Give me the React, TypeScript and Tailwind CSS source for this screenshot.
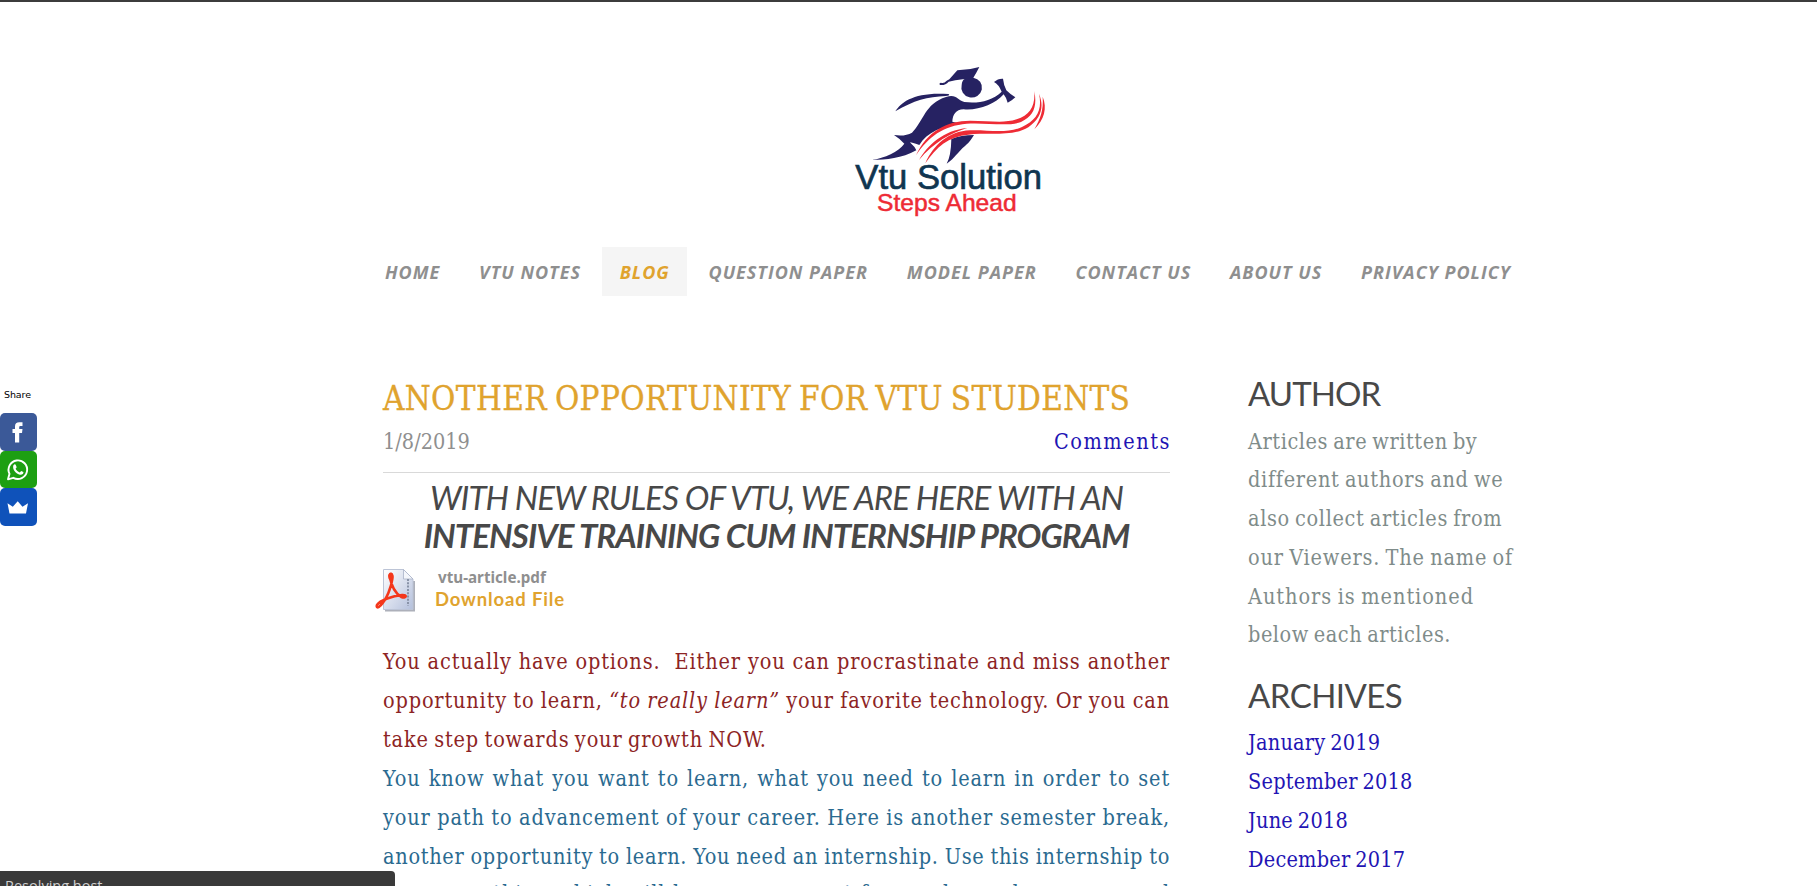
import React from "react";

const NAV = ["HOME", "VTU NOTES", "BLOG", "QUESTION PAPER", "MODEL PAPER", "CONTACT US", "ABOUT US", "PRIVACY POLICY"];

type LineProps = { children: React.ReactNode; className: string };

function Line({ children, className }: LineProps) {
  return <span className={`block h-[38.8px] whitespace-nowrap ${className}`}>{children}</span>;
}

function Logo() {
  return (
    <svg width="220" height="170" viewBox="0 0 660 510" className="block" aria-label="Vtu Solution">
      <g fill="#262262">
        <path d="M328 73 L352 46 Q385 46 418 36 Q408 56 400 68 A31 30 0 1 1 365 90 Q366 76 374 72 L346 76 Q336 78 326 80 Q316 92 300 90 Q296 84 303 83 Q312 86 320 77 Z" />
        <path d="M166 169 C184 140 225 110 325 117 C330 119 328 122 318 123 C262 125 222 136 166 169 Z" />
        <path d="M94 315 C135 309 175 291 193 266 Q178 250 162 240 Q195 245 216 233 C250 200 255 145 318 126 C350 116 352 136 373 141 C415 146 455 138 485 110 Q476 88 462 81 Q474 70 489 71 Q491 90 499 106 Q512 119 526 127 Q515 138 503 143 Q499 128 491 118 C465 148 415 167 371 163 C347 163 338 180 337 200 Q350 202 362 207 C310 212 260 232 238 270 Q205 258 211 263 Q225 275 229 286 C185 310 140 315 94 315 Z" />
        <path d="M334 252 Q362 240 402 240 C391 258 386 263 375 273 C352 292 345 309 320 326 Q333 304 334 252 Z" />
      </g>
      <g fill="#ee2b35">
        <path d="M228 301 C260 230 320 197 390 197 C450 197 490 206 530 193 C569 180 586 155 583 108 C592 155 581 184 543 201 C500 216 440 202 380 206 C310 212 265 245 228 301 Z" />
        <path d="M237 315 C263 270 310 226 382 219 C335 232 280 263 237 315 Z" />
        <path d="M256 325 C280 270 325 229 390 226 C445 224 500 237 546 216 C590 195 608 166 597 116 C613 155 604 190 565 217 C520 246 440 232 385 239 C325 245 290 275 256 325 Z" />
        <path d="M608 125 C622 160 613 193 583 223 C601 191 611 166 608 125 Z" />
      </g>
      <text x="46" y="402" textLength="560" lengthAdjust="spacingAndGlyphs" fontFamily="Liberation Sans, sans-serif" fontSize="106" fill="#0f3550" stroke="#0f3550" strokeWidth="2">Vtu Solution</text>
      <text x="111" y="468" textLength="419" lengthAdjust="spacingAndGlyphs" fontFamily="Liberation Sans, sans-serif" fontSize="73" fill="#ee2b35" stroke="#ee2b35" strokeWidth="1.5">Steps Ahead</text>
    </svg>
  );
}

function PdfIcon() {
  return (
    <svg width="41" height="44" viewBox="0 0 41 44" className="block">
      <defs>
        <linearGradient id="sheet" x1="0" y1="0" x2="1" y2="1">
          <stop offset="0" stopColor="#ffffff" />
          <stop offset="1" stopColor="#b4c0dc" />
        </linearGradient>
      </defs>
      <path d="M10 42.5 H39 V13" fill="none" stroke="#8a8f9c" strokeWidth="2" opacity="0.7" />
      <path d="M8.500 1.500 H28.500 L38 11 V41.500 H8.500 Z" fill="url(#sheet)" stroke="#bcc4d6" />
      <path d="M28.500 1.500 V11 H38 Z" fill="#f4f6fb" stroke="#a9b3c8" strokeWidth="0.800" />
      <path d="M33 11 V38" stroke="#8993a8" strokeWidth="2" strokeDasharray="2 1.300" />
      <path d="M14.500 7.500 C16 5 18 6 17.300 11 C16.300 19 12 31 5.500 37.500 C3 40.500 1 39.500 2 37 C5 32 18 28 27 27 C33 26.500 31 31 26.500 29 C20 25.500 16 16 14.500 7.500 Z" fill="none" stroke="#f4371b" strokeWidth="2.600" strokeLinejoin="round" />
      <ellipse cx="15.800" cy="8.500" rx="2.500" ry="4" fill="#f4371b" />
    </svg>
  );
}

function ShareBar() {
  return (
    <aside className="absolute left-0 top-[386px] w-[37px]">
      <div className="h-[25px] pl-1 font-['DejaVu_Sans',sans-serif] text-[9.500px] leading-[14px] tracking-[-0.1px] text-black">Share</div>
      <div className="flex h-[38px] items-center justify-center rounded-[5px] bg-[#3b5998]">
        <svg width="37" height="38" viewBox="0 0 37 38">
          <path d="M15 29.500 V20 H12.500 V16 H15 V13.500 C15 10.500 16.500 9.300 19.300 9.300 H22.500 V13 H20.500 C19.500 13 19.200 13.500 19.200 14.500 V16 H22.500 L22 20 H19.200 V29.500 Z" fill="#fff" />
        </svg>
      </div>
      <div className="flex h-[37px] items-center justify-center rounded-[5px] bg-[#1d9f12]">
        <svg width="37" height="37" viewBox="0 0 37 37">
          <path d="M8 28.300 L9.500 22.800 A9.300 9.300 0 1 1 13.300 26.800 Z" fill="none" stroke="#fff" strokeWidth="1.900" strokeLinejoin="round" />
          <path d="M13.300 14.500 C14.500 12.800 15.500 13.200 16 14.500 L16.700 16.200 L15.600 17.800 C16.500 19.500 18 20.800 19.700 21.400 L21.200 19.900 L23.400 21 C23.800 22.500 22 24 20 23.700 C16 23 12.200 18.500 13.300 14.500 Z" fill="#fff" />
        </svg>
      </div>
      <div className="flex h-[38px] items-center justify-center rounded-[5px] bg-[#0f52ba]">
        <svg width="37" height="38" viewBox="0 0 37 38">
          <path d="M7.500 15.200 L12.800 18.700 L17.700 13.300 L22.500 18.700 L28 15.200 L26 25.500 H9.500 Z" fill="#fff" />
        </svg>
      </div>
    </aside>
  );
}

export default function App() {
  return (
    <div className="relative h-[886px] w-full overflow-hidden border-t-2 border-[#3c3c3c] bg-white">
      <header className="flex flex-col">
        <div className="ml-[840px] mt-[53px] h-[170px] w-[220px]">
          <Logo />
        </div>
        <nav className="ml-[367.500px] mt-[22px] flex h-[49px] gap-[3.750px] font-['Open_Sans',sans-serif] text-[18px] font-bold italic leading-[51px] tracking-[1px] text-[#8f8f8f]">
          {NAV.map((item) => (
            <a key={item} className={`whitespace-nowrap px-[17.500px] ${item === "BLOG" ? "bg-[#f5f5f5] text-[#e0a32e]" : ""}`}>
              {item}
            </a>
          ))}
        </nav>
      </header>

      <main className="ml-[383px] mt-[77px] flex gap-[78px]">
        <article className="w-[787px]">
          <h2 className="mt-[3px] h-[45px] whitespace-nowrap font-['DejaVu_Serif_Condensed','DejaVu_Serif',serif] text-[33px] leading-[45px] tracking-[0.34px] [word-spacing:-1.7px] text-[#e0a32e] [-webkit-text-stroke:0.3px_#e0a32e]">
            ANOTHER OPPORTUNITY FOR VTU STUDENTS
          </h2>
          <div className="flex h-[52px] justify-between border-b border-[#d9d9d9] font-['DejaVu_Serif_Condensed','DejaVu_Serif',serif] text-[21.500px] leading-[41px]">
            <span className="text-[#8f8f8f]">1/8/2019</span>
            <a className="-mr-px tracking-[1.550px] text-[#2214b4]">Comments</a>
          </div>
          <h2 className="mt-[5px] text-center font-['Lato',sans-serif] text-[33px] italic leading-[38px] text-[#484848]">
            <span className="block whitespace-nowrap tracking-[-0.92px]">WITH NEW RULES OF VTU, WE ARE HERE WITH AN</span>
            <span className="block whitespace-nowrap font-bold tracking-[-0.92px]">INTENSIVE TRAINING CUM INTERNSHIP PROGRAM</span>
          </h2>
          <div className="-ml-2 mt-[14px] flex h-[44px]">
            <PdfIcon />
            <div className="ml-[19px] flex flex-col">
              <span className="pl-[3px] font-['Noto_Sans',sans-serif] text-[15.200px] font-bold leading-[18px] text-[#8f8f8f]">vtu-article.pdf</span>
              <a className="font-['Lato',sans-serif] text-[18.500px] font-bold leading-[26px] tracking-[0.850px] text-[#e0a32e]">Download File</a>
            </div>
          </div>
          <div className="mt-[31px] font-['DejaVu_Serif_Condensed','DejaVu_Serif',serif] text-[21.500px] leading-[38.800px] tracking-[0.83px] [word-spacing:-1.5px]">
            <p className="text-[#8d2424]">
              <Line className="[text-align-last:justify]">You actually have options.&nbsp; Either you can procrastinate and miss another</Line>
              <Line className="[text-align-last:justify]">opportunity to learn, <em>“to really learn”</em> your favorite technology. Or you can</Line>
              <Line className="">take step towards your growth NOW.</Line>
            </p>
            <p className="mt-px text-[#2a6a90]">
              <Line className="[text-align-last:justify]">You know what you want to learn, what you need to learn in order to set</Line>
              <Line className="[text-align-last:justify]">your path to advancement of your career. Here is another semester break,</Line>
              <Line className="tracking-[0.7px] [text-align-last:justify]">another opportunity to learn. You need an internship. Use this internship to</Line>
              <Line className="-mt-[1.300px] [text-align-last:justify]">earn something which will be your passport for good uses here as a need</Line>
            </p>
          </div>
        </article>

        <aside className="w-[290px] font-['DejaVu_Serif_Condensed','DejaVu_Serif',serif] text-[21.500px] leading-[38.800px]">
          <h2 className="h-[49.500px] font-['Lato',sans-serif] text-[33px] leading-[40px] tracking-[-0.95px] text-[#484848]">AUTHOR</h2>
          <p className="[word-spacing:-1.5px] text-[#7f8c8a]">
            <Line className="tracking-[0.56px]">Articles are written by</Line>
            <Line className="tracking-[0.7px]">different authors and we</Line>
            <Line className="tracking-[0.64px]">also collect articles from</Line>
            <Line className="tracking-[0.8px]">our Viewers. The name of</Line>
            <Line className="tracking-[0.95px]">Authors is mentioned</Line>
            <Line className="tracking-[0.5px]">below each articles.</Line>
          </p>
          <h2 className="mt-[20px] h-[49px] font-['Lato',sans-serif] text-[33px] leading-[41px] tracking-[-0.55px] text-[#484848]">ARCHIVES</h2>
          <div className="tracking-[0.22px] [word-spacing:-1.5px] text-[#2214b4]">
            <Line className="">January 2019</Line>
            <Line className="">September 2018</Line>
            <Line className="">June 2018</Line>
            <Line className="">December 2017</Line>
          </div>
        </aside>
      </main>

      <ShareBar />
      <div className="absolute left-0 top-[869px] h-[15px] w-[395px] overflow-hidden rounded-tr-[4px] bg-[#3a3a3a] pl-[5px] font-['Open_Sans',sans-serif] text-[14.500px] leading-[30px] text-[#d0d0d0]">
        Resolving host...
      </div>
    </div>
  );
}
